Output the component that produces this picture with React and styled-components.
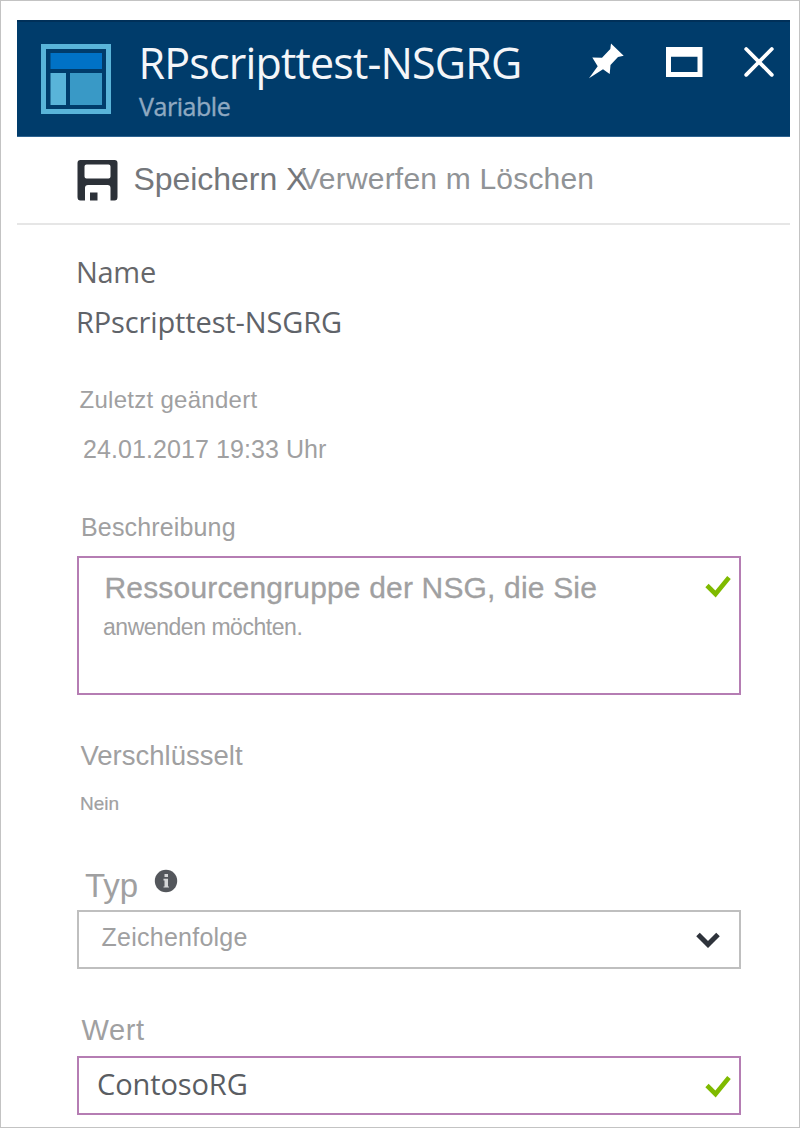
import React from "react";
import styled, { createGlobalStyle } from "styled-components";

const GlobalStyle = createGlobalStyle`
  * { box-sizing: border-box; }
  body { margin: 0; background: #fff; }
`;

const Blade = styled.main`
  width: 800px;
  height: 1128px;
  padding: 19px 9px 0 16px;
  border: 1px solid #c3c3c3;
  background: #fff;
  overflow: hidden;
  font-family: "Liberation Sans", Arial, sans-serif;
`;

const Text = styled.span`
  display: block;
  flex: none;
  height: 40px;
  line-height: 40px;
  white-space: pre;
  font-family: ${(p) => (p.$ui ? '"Open Sans", "Noto Sans", sans-serif' : "inherit")};
  font-size: ${(p) => p.$size}px;
  font-weight: 400;
  letter-spacing: ${(p) => p.$track || 0}px;
  color: ${(p) => p.$color || "#a0a0a1"};
  margin: ${(p) => p.$top || 0}px 0 0 ${(p) => p.$left || 0}px;
  -webkit-text-stroke: ${(p) => p.$stroke || 0}px currentColor;
`;

const Header = styled.header`
  display: flex;
  height: 117px;
  background: #003c6b;
  border-top: 2px solid #003059;
  border-bottom: 1px solid #2d6390;
`;

const HeaderIcon = styled.svg`
  flex: none;
  margin: 22px 0 0 24px;
`;

const Titles = styled.div`
  width: 450px;
  margin-left: 27px;
  padding-top: 21px;
  flex: none;
`;

const WindowActions = styled.div`
  display: flex;
  align-items: flex-start;
  padding-top: 18px;
`;

const IconButton = styled.button`
  display: block;
  width: ${(p) => p.$width}px;
  height: 44px;
  margin: 0 0 0 ${(p) => p.$left || 0}px;
  padding: 0;
  border: 0;
  background: none;
  svg { display: block; }
`;

const Toolbar = styled.nav`
  display: flex;
  height: 88px;
  padding-left: 60px;
  border-bottom: 2px solid #e6e6e6;
`;

const SaveIcon = styled.svg`
  flex: none;
  margin-top: 23px;
`;

const Form = styled.section`
  padding-left: 58px;
  padding-top: 27px;
`;

const Box = styled.div`
  display: flex;
  justify-content: space-between;
  width: 664px;
  height: ${(p) => p.$height}px;
  margin: ${(p) => p.$top}px 0 0 2px;
  border: 2px solid ${(p) => (p.$edited ? "#b57db3" : "#bfbfbf")};
`;

const FieldIcon = styled.svg`
  flex: none;
  margin: ${(p) => p.$top}px ${(p) => p.$right}px 0 0;
`;

const LabelRow = styled.div`
  display: flex;
  margin-top: 42px;
`;

const Check = ({ top }) => (
  <FieldIcon $top={top} $right={8} width="26" height="24" viewBox="0 0 26 24">
    <path d="M2 10.5 L10.5 19 L24 2.5" fill="none" stroke="#7fba00" strokeWidth="4.6" />
  </FieldIcon>
);

export default function App() {
  return (
    <>
      <GlobalStyle />
      <Blade>
        <Header>
          <HeaderIcon width="70" height="70" viewBox="0 0 70 70">
            <rect x="2.5" y="2.5" width="65" height="65" fill="none" stroke="#59b4d9" strokeWidth="5" />
            <rect x="9.5" y="9" width="51.5" height="16" fill="#0072c6" />
            <rect x="9.5" y="29" width="15.5" height="32" fill="#59b4d9" />
            <rect x="29" y="29" width="32" height="32" fill="#3999c6" />
          </HeaderIcon>
          <Titles>
            <Text as="h1" $ui $size={43} $track={-0.82} $color="#f4f6f9" $left={0.5}>RPscripttest-NSGRG</Text>
            <Text $ui $size={25} $track={-0.45} $color="#8fa9c1" $top={3} $left={1} $stroke={0.4}>Variable</Text>
          </Titles>
          <WindowActions>
            <IconButton $width={36} aria-label="Pin">
              <svg width="36" height="44" viewBox="0 0 36 44">
                <path d="M23 3.500 L35.700 15.700 L30 17 L22.500 25 L21.700 34 L15 29.300 L1 38.300 L9.700 26.300 L4.300 17.500 L14 17.700 L22.300 9 Z" fill="#fff" />
              </svg>
            </IconButton>
            <IconButton $width={37} $left={42} aria-label="Maximize">
              <svg width="37" height="44" viewBox="0 0 37 44">
                <path fillRule="evenodd" d="M0 7H36.500V37H0ZM5 16.700V32H31.500V16.700Z" fill="#fff" />
              </svg>
            </IconButton>
            <IconButton $width={30} $left={41} aria-label="Close">
              <svg width="30" height="44" viewBox="0 0 30 44">
                <path d="M2.200 9 L27.800 34.800 M27.800 9 L2.200 34.800" stroke="#fff" strokeWidth="3.8" strokeLinecap="round" />
              </svg>
            </IconButton>
          </WindowActions>
        </Header>

        <Toolbar>
          <SaveIcon width="41" height="41" viewBox="0 0 40 41">
            <path fillRule="evenodd" fill="#2c3138" d="M3 0H37Q40 0 40 3V37Q40 40.5 37 40.5H33V28Q33 25 30 25H10.500Q7.500 25 7.500 28V40.500H3Q0 40.500 0 37V3Q0 0 3 0ZM9 4.500Q7 4.500 7 6.500V16.500Q7 18.500 9 18.500H31Q33 18.500 33 16.500V6.500Q33 4.500 31 4.500ZM12.500 32.500H20V40.500H12.500Z" />
          </SaveIcon>
          <Text $size={32} $track={-0.05} $color="#74777b" $left={15.5} $top={22}>Speichern X</Text>
          <Text $size={30} $track={0.2} $color="#909396" $left={-7} $top={22}>Verwerfen m Löschen</Text>
        </Toolbar>

        <Form>
          <Text $ui $size={29} $track={-0.3} $color="#66676a" $left={1}>Name</Text>
          <Text $ui $size={29} $track={-0.13} $color="#5f6369" $left={1} $top={10}>RPscripttest-NSGRG</Text>
          <Text $size={24} $track={0.28} $left={4.5} $top={38}>Zuletzt geändert</Text>
          <Text $size={25} $track={0.08} $left={8} $top={9}>24.01.2017 19:33 Uhr</Text>
          <Text $size={25} $track={0.15} $left={6} $top={38}>Beschreibung</Text>
          <Box $edited $height={139} $top={9}>
            <div>
              <Text $size={30} $track={0.17} $stroke={0.3} $left={25.5} $top={10}>Ressourcengruppe der NSG, die Sie</Text>
              <Text $size={23} $track={-0.46} $left={24} $top={-1}>anwenden möchten.</Text>
            </div>
            <Check top={17} />
          </Box>
          <Text $size={27.5} $left={5.5} $top={41}>Verschlüsselt</Text>
          <Text $size={19} $left={5} $top={8} $stroke={0.2}>Nein</Text>
          <LabelRow>
            <Text $size={33} $left={10}>Typ</Text>
            <FieldIcon $top={3} $right={0} width="40" height="24" viewBox="0 0 40 24">
              <circle cx="28" cy="12" r="11.200" fill="#54575c" />
              <path d="M26.500 5H30V8H26.500ZM25.500 9.800H30V17.500H31V18.500H25.500V17.500H26.500V11.500H25.500Z" fill="#d5d6d7" />
            </FieldIcon>
          </LabelRow>
          <Box $height={59} $top={4}>
            <Text $size={25} $track={0.25} $left={22.5} $top={5}>Zeichenfolge</Text>
            <FieldIcon $top={20} $right={19} width="24" height="17" viewBox="0 0 24 17">
              <path d="M2 2.500 L12 12.500 L22 2.500" fill="none" stroke="#2e333b" strokeWidth="5" />
            </FieldIcon>
          </Box>
          <Text $size={29} $track={0.6} $left={6.5} $top={41}>Wert</Text>
          <Box $edited $height={59} $top={6}>
            <Text $ui $size={29} $track={-0.1} $color="#5a5d62" $left={18} $top={6}>ContosoRG</Text>
            <Check top={17} />
          </Box>
        </Form>
      </Blade>
    </>
  );
}
